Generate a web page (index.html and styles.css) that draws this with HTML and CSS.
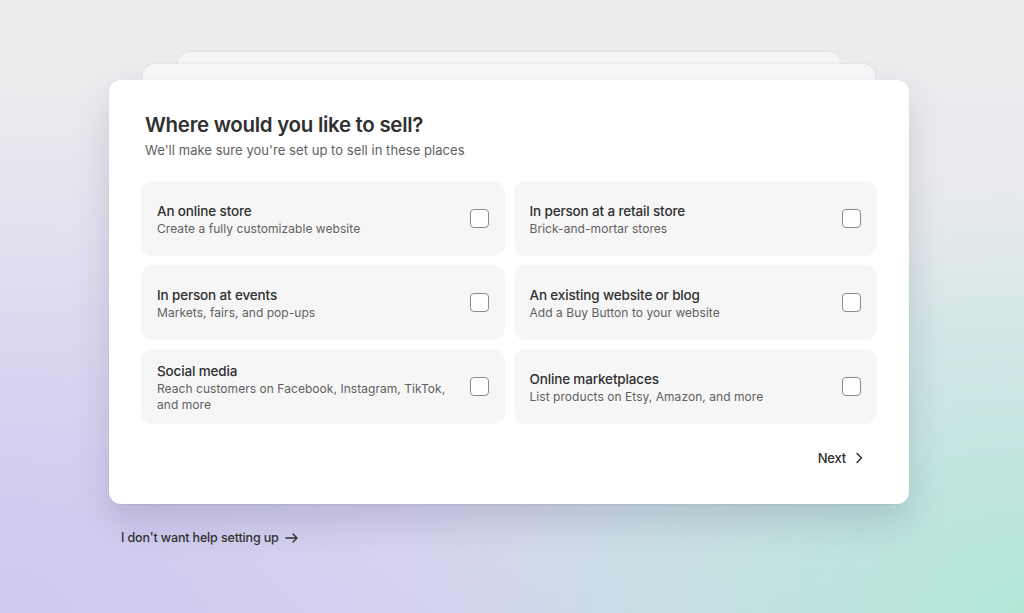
FILE: index.html
```html
<!DOCTYPE html>
<html lang="en">
<head>
<meta charset="utf-8">
<title>Where would you like to sell?</title>
<link rel="stylesheet" href="styles.css">
</head>
<body>
<main class="stage">
  <div class="back back-far"></div>
  <div class="back back-near"></div>
  <section class="card">
    <header class="card-head">
      <h1 class="title">Where would you like to sell?</h1>
      <p class="subtitle">We'll make sure you're set up to sell in these places</p>
    </header>
    <div class="options">
      <label class="option">
        <span class="option-text">
          <span class="option-title">An online store</span>
          <span class="option-desc">Create a fully customizable website</span>
        </span>
        <span class="checkbox"></span>
      </label>
      <label class="option">
        <span class="option-text">
          <span class="option-title">In person at a retail store</span>
          <span class="option-desc">Brick-and-mortar stores</span>
        </span>
        <span class="checkbox"></span>
      </label>
      <label class="option">
        <span class="option-text">
          <span class="option-title">In person at events</span>
          <span class="option-desc">Markets, fairs, and pop-ups</span>
        </span>
        <span class="checkbox"></span>
      </label>
      <label class="option">
        <span class="option-text">
          <span class="option-title">An existing website or blog</span>
          <span class="option-desc">Add a Buy Button to your website</span>
        </span>
        <span class="checkbox"></span>
      </label>
      <label class="option">
        <span class="option-text">
          <span class="option-title">Social media</span>
          <span class="option-desc">Reach customers on Facebook, Instagram, TikTok, and more</span>
        </span>
        <span class="checkbox"></span>
      </label>
      <label class="option">
        <span class="option-text">
          <span class="option-title">Online marketplaces</span>
          <span class="option-desc">List products on Etsy, Amazon, and more</span>
        </span>
        <span class="checkbox"></span>
      </label>
    </div>
    <div class="actions">
      <button class="next" type="button">Next
        <svg width="16" height="16" viewBox="0 0 16 16" aria-hidden="true"><path d="M6 3.5 10.5 8 6 12.5" fill="none" stroke="#303030" stroke-width="1.5" stroke-linecap="round" stroke-linejoin="round"/></svg>
      </button>
    </div>
  </section>
  <button class="skip" type="button">I don't want help setting up
    <svg width="16" height="16" viewBox="0 0 16 16" aria-hidden="true"><path d="M2 8h11M9 4l4 4-4 4" fill="none" stroke="#303030" stroke-width="1.4" stroke-linecap="round" stroke-linejoin="round"/></svg>
  </button>
</main>
</body>
</html>
```
FILE: styles.css
```css
* { box-sizing: border-box; }

html, body {
  margin: 0;
  height: 100%;
}

body {
  font-family: Inter, "Liberation Sans", sans-serif;
  color: #303030;
  background:
    radial-gradient(ellipse 620px 440px at 1024px 613px, rgba(178, 232, 216, 1) 0%, rgba(178, 232, 216, 0) 100%),
    radial-gradient(ellipse 700px 520px at 0px 613px, rgba(206, 200, 240, 1) 0%, rgba(206, 200, 240, 0) 100%),
    linear-gradient(180deg, #ededef 0%, #e9e9ee 40%, #d9d8ee 100%);
  overflow: hidden;
}

.stage {
  width: 800px;
  margin-left: 109px;
  padding-top: 52px;
  display: flex;
  flex-direction: column;
}

.back {
  border-radius: 12px 12px 0 0;
  box-shadow: 0 -1px 3px rgba(0, 0, 0, 0.05);
}

.back-far {
  height: 12px;
  margin: 0 68px 0 69px;
  background: #f5f5f6;
}

.back-near {
  height: 16px;
  margin: 0 34px;
  background: #f8f8f9;
}

.card {
  background: #fff;
  border-radius: 12px;
  padding: 31px 32px 30px 32px;
  box-shadow: 0 18px 36px rgba(40, 40, 80, 0.16), 0 1px 2px rgba(0, 0, 0, 0.05);
  display: flex;
  flex-direction: column;
}

.card-head {
  padding-left: 4px;
}

.title {
  margin: 0;
  font-size: 20.5px;
  line-height: 28px;
  font-weight: 600;
  letter-spacing: -0.3px;
  color: #303030;
}

.subtitle {
  margin: 1px 0 0;
  font-size: 13px;
  line-height: 20px;
  letter-spacing: 0.05px;
  color: #616161;
}

.options {
  margin-top: 21px;
  display: grid;
  grid-template-columns: 1fr 1fr;
  grid-auto-rows: 75px;
  column-gap: 9px;
  row-gap: 9px;
}

.option {
  background: #f6f6f6;
  border-radius: 12px;
  padding: 8px 16px;
  display: flex;
  align-items: center;
  gap: 16px;
  cursor: pointer;
}

.option-text {
  flex: 1;
  display: flex;
  flex-direction: column;
}

.option-title {
  font-size: 13.5px;
  line-height: 20px;
  font-weight: 500;
  letter-spacing: -0.15px;
  color: #303030;
}

.option-desc {
  font-size: 12px;
  line-height: 16px;
  letter-spacing: 0.05px;
  color: #616161;
}

.checkbox {
  width: 19px;
  height: 19px;
  flex: none;
  border: 1px solid #8a8a8a;
  border-radius: 4px;
  background: #fff;
}

.actions {
  margin-top: 18px;
  display: flex;
  justify-content: flex-end;
}

.next, .skip {
  font-family: inherit;
  background: none;
  border: 0;
  display: flex;
  align-items: center;
  color: #303030;
  cursor: pointer;
}

.next {
  font-size: 13px;
  line-height: 20px;
  font-weight: 500;
  letter-spacing: -0.2px;
  padding: 6px 12px;
  margin-right: -2px;
  gap: 5px;
}

.skip {
  align-self: flex-start;
  margin-top: 18px;
  font-size: 12.5px;
  line-height: 20px;
  font-weight: 500;
  letter-spacing: -0.15px;
  padding: 6px 12px;
  gap: 5px;
}
```
